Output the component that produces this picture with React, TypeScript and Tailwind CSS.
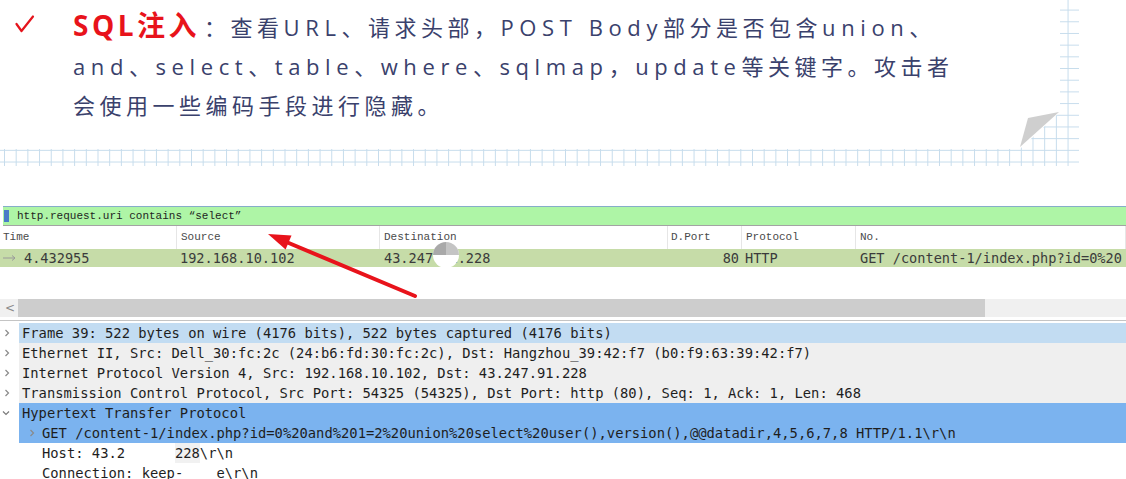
import React from "react";

const mono = "font-['DejaVu_Sans_Mono',monospace]";
const serifMono = "font-['Liberation_Mono',monospace]";

const columns = [
  { label: "Time", w: "w-[177px]", pad: "pl-[3px]" },
  { label: "Source", w: "w-[203px]", pad: "pl-[4px]" },
  { label: "Destination", w: "w-[288px]", pad: "pl-[4px]" },
  { label: "D.Port", w: "w-[74px]", pad: "pl-[3px]" },
  { label: "Protocol", w: "w-[114px]", pad: "pl-[4px]" },
  { label: "No.", w: "flex-1", pad: "pl-[4px]" },
];

const treeRows = [
  { text: "Frame 39: 522 bytes on wire (4176 bits), 522 bytes captured (4176 bits)", bg: "bg-[#c2dcf2]" },
  { text: "Ethernet II, Src: Dell_30:fc:2c (24:b6:fd:30:fc:2c), Dst: Hangzhou_39:42:f7 (b0:f9:63:39:42:f7)", bg: "bg-[#efefef]" },
  { text: "Internet Protocol Version 4, Src: 192.168.10.102, Dst: 43.247.91.228", bg: "bg-[#efefef]" },
  { text: "Transmission Control Protocol, Src Port: 54325 (54325), Dst Port: http (80), Seq: 1, Ack: 1, Len: 468", bg: "bg-[#efefef]" },
];

const Chevron = ({ open = false }: { open?: boolean }) => (
  <svg width="8" height="8" viewBox="0 0 8 8" className="shrink-0">
    {open ? (
      <path d="M1 2.5 L4 5.5 L7 2.5" fill="none" stroke="#7a7a7a" strokeWidth="1.2" />
    ) : (
      <path d="M2.5 1 L5.5 4 L2.5 7" fill="none" stroke="#8a8a8a" strokeWidth="1.2" />
    )}
  </svg>
);

// latin runs on the slide are set a little wider than the CJK
const L = ({ children }: { children: React.ReactNode }) => (
  <span className="tracking-[5.6px] font-medium">{children}</span>
);

export default function App() {
  return (
    <div className="relative w-[1126px] h-[479px] overflow-hidden bg-white">
      {/* slide with grid paper border */}
      <div className="relative w-[1079px] h-[166px] [background-image:linear-gradient(#c6dcec_1px,transparent_1px),linear-gradient(90deg,#c6dcec_1px,transparent_1px)] [background-size:11.7px_11.7px] [background-position:4px_9.6px]">
        <div className="w-[1060px] h-[149px] bg-white [clip-path:polygon(0_0,100%_0,100%_112px,1020px_100%,0_100%)]">
          <div className="flex">
            <svg width="73" height="40" viewBox="0 0 73 40" className="shrink-0">
              <path d="M16.5 24 L21.5 31 L33 16.5" fill="none" stroke="#e5141c" strokeWidth="2.2" strokeLinecap="round" strokeLinejoin="round" />
            </svg>
            <p className="pt-[6px] leading-[39px] whitespace-nowrap text-[22px] font-normal tracking-[4.5px] text-[#3a416c] font-['Open_Sans','Noto_Sans_CJK_SC',sans-serif]">
              <span className="text-[28px] font-bold text-[#e8131b] tracking-[3.5px]">SQL注入</span>
              <span className="ml-[4px]">：</span>查看<L>URL</L>、请求头部，<L>POST Body</L>部分是否包含<L>union</L>、
              <br />
              <L>and</L>、<L>select</L>、<L>table</L>、<L>where</L>、<L>sqlmap</L>，<L>update</L>等关键字。攻击者
              <br />
              会使用一些编码手段进行隐藏。
            </p>
          </div>
        </div>
        <svg className="absolute left-[1018px] top-[110px]" width="44" height="40" viewBox="0 0 44 40">
          <polygon points="2,37 10,8 41,2" fill="#cfcfcf" />
        </svg>
      </div>

      {/* wireshark */}
      <div className="mt-[40px]">
        <div className="ml-[3px] h-[20px] border-t border-t-[#86adc9] border-b border-b-[#a3a3a3] bg-[#aef5a6] flex items-center">
          <div className="w-[5px] h-[12px] bg-[#4a7cc8] ml-[1px] mr-[8px]" />
          <span className={`${serifMono} text-[11px] text-[#1f1f1f]`}>http.request.uri contains “select”</span>
        </div>

        <div className="flex h-[23px] items-center bg-white">
          {columns.map((c) => (
            <div key={c.label} className={`${c.w} ${c.pad} h-full flex items-center border-r border-r-[#e6e6e6] ${serifMono} text-[11px] text-[#4a4a4a]`}>
              {c.label}
            </div>
          ))}
        </div>

        <div className={`relative flex h-[18px] items-center bg-[#c6dca8] ${mono} text-[13.6px] text-[#3b3b3b]`}>
          <div className="w-[177px] flex items-center">
            <svg width="22" height="10" viewBox="0 0 22 10" className="ml-[2px]">
              <path d="M1 5 H13 M10 2.5 L13 5 L10 7.5" fill="none" stroke="#9a9a9a" strokeWidth="1" />
            </svg>
            <span>4.432955</span>
          </div>
          <div className="w-[203px] pl-[3px]">192.168.10.102</div>
          <div className="w-[288px] pl-[4px]">43.247.91.228</div>
          <div className="w-[74px] pr-[3px] text-right">80</div>
          <div className="w-[114px] pl-[3px]">HTTP</div>
          <div className="flex-1 pl-[4px] whitespace-nowrap overflow-hidden">GET /content-1/index.php?id=0%20</div>
          <svg className="absolute left-[432px] top-[-7px]" width="28" height="26" viewBox="0 0 28 26">
            <circle cx="14" cy="13" r="13" fill="#ffffff" />
            <path d="M1 13 A13 13 0 0 1 14 0 L14 13 Z" fill="#a9a9a9" />
            <path d="M14 0 A13 13 0 0 1 27 13 L14 13 Z" fill="#c4c4c4" />
          </svg>
        </div>

        <div className="h-[32px] bg-white" />

        <div className="flex h-[18px] items-center bg-[#f0f0f0]">
          <span className="w-[18px] pl-[5px] text-[12px] text-[#8a8a8a] font-['DejaVu_Sans',sans-serif]">&lt;</span>
          <div className="w-[967px] h-full bg-[#cdcdcd]" />
        </div>

        <div className="h-[3px] bg-white" />
        <div className="h-px bg-[#c4c4c4]" />
        <div className="h-[2px] bg-white" />

        <div className={`${mono} text-[13.8px] text-[#1e1e1e] whitespace-nowrap`}>
          {treeRows.map((r) => (
            <div key={r.text} className="flex h-[20px] items-center">
              <div className="w-[19px] h-full flex items-center pl-[3px] bg-white">
                <Chevron />
              </div>
              <div className={`flex-1 h-full flex items-center pl-[3px] ${r.bg}`}>{r.text}</div>
            </div>
          ))}
          <div className="flex h-[20px] items-center">
            <div className="w-[19px] h-full flex items-center pl-[2px] bg-white">
              <Chevron open />
            </div>
            <div className="flex-1 h-full flex items-center pl-[3px] bg-[#7bb3ef]">Hypertext Transfer Protocol</div>
          </div>
          <div className="flex h-[20px] items-center">
            <div className="w-[19px] h-full bg-white" />
            <div className="flex-1 h-full flex items-center bg-[#7bb3ef]">
              <div className="w-[23px] flex pl-[9px]">
                <Chevron />
              </div>
              GET /content-1/index.php?id=0%20and%201=2%20union%20select%20user(),version(),@@datadir,4,5,6,7,8 HTTP/1.1\r\n
            </div>
          </div>
          <div className="flex h-[20px] items-center pl-[42px] bg-white">
            <span>Host: 43.2</span>
            <span className="text-transparent">47.91.</span>
            <span className="bg-[#f1f1f1]">228</span>
            <span>\r\n</span>
          </div>
          <div className="flex h-[15px] items-start pt-[2px] pl-[42px] bg-white leading-[16px]">
            <span>Connection: keep-</span>
            <span className="text-transparent">aliv</span>
            <span>e\r\n</span>
          </div>
        </div>
      </div>

      {/* red annotation arrow */}
      <svg className="absolute left-0 top-0 pointer-events-none" width="1126" height="479" viewBox="0 0 1126 479">
        <line x1="415" y1="296" x2="284" y2="241" stroke="#e8131b" strokeWidth="4" strokeLinecap="round" />
        <polygon points="268,234 285.6,249.5 291.5,235.5" fill="#e8131b" />
      </svg>
    </div>
  );
}
